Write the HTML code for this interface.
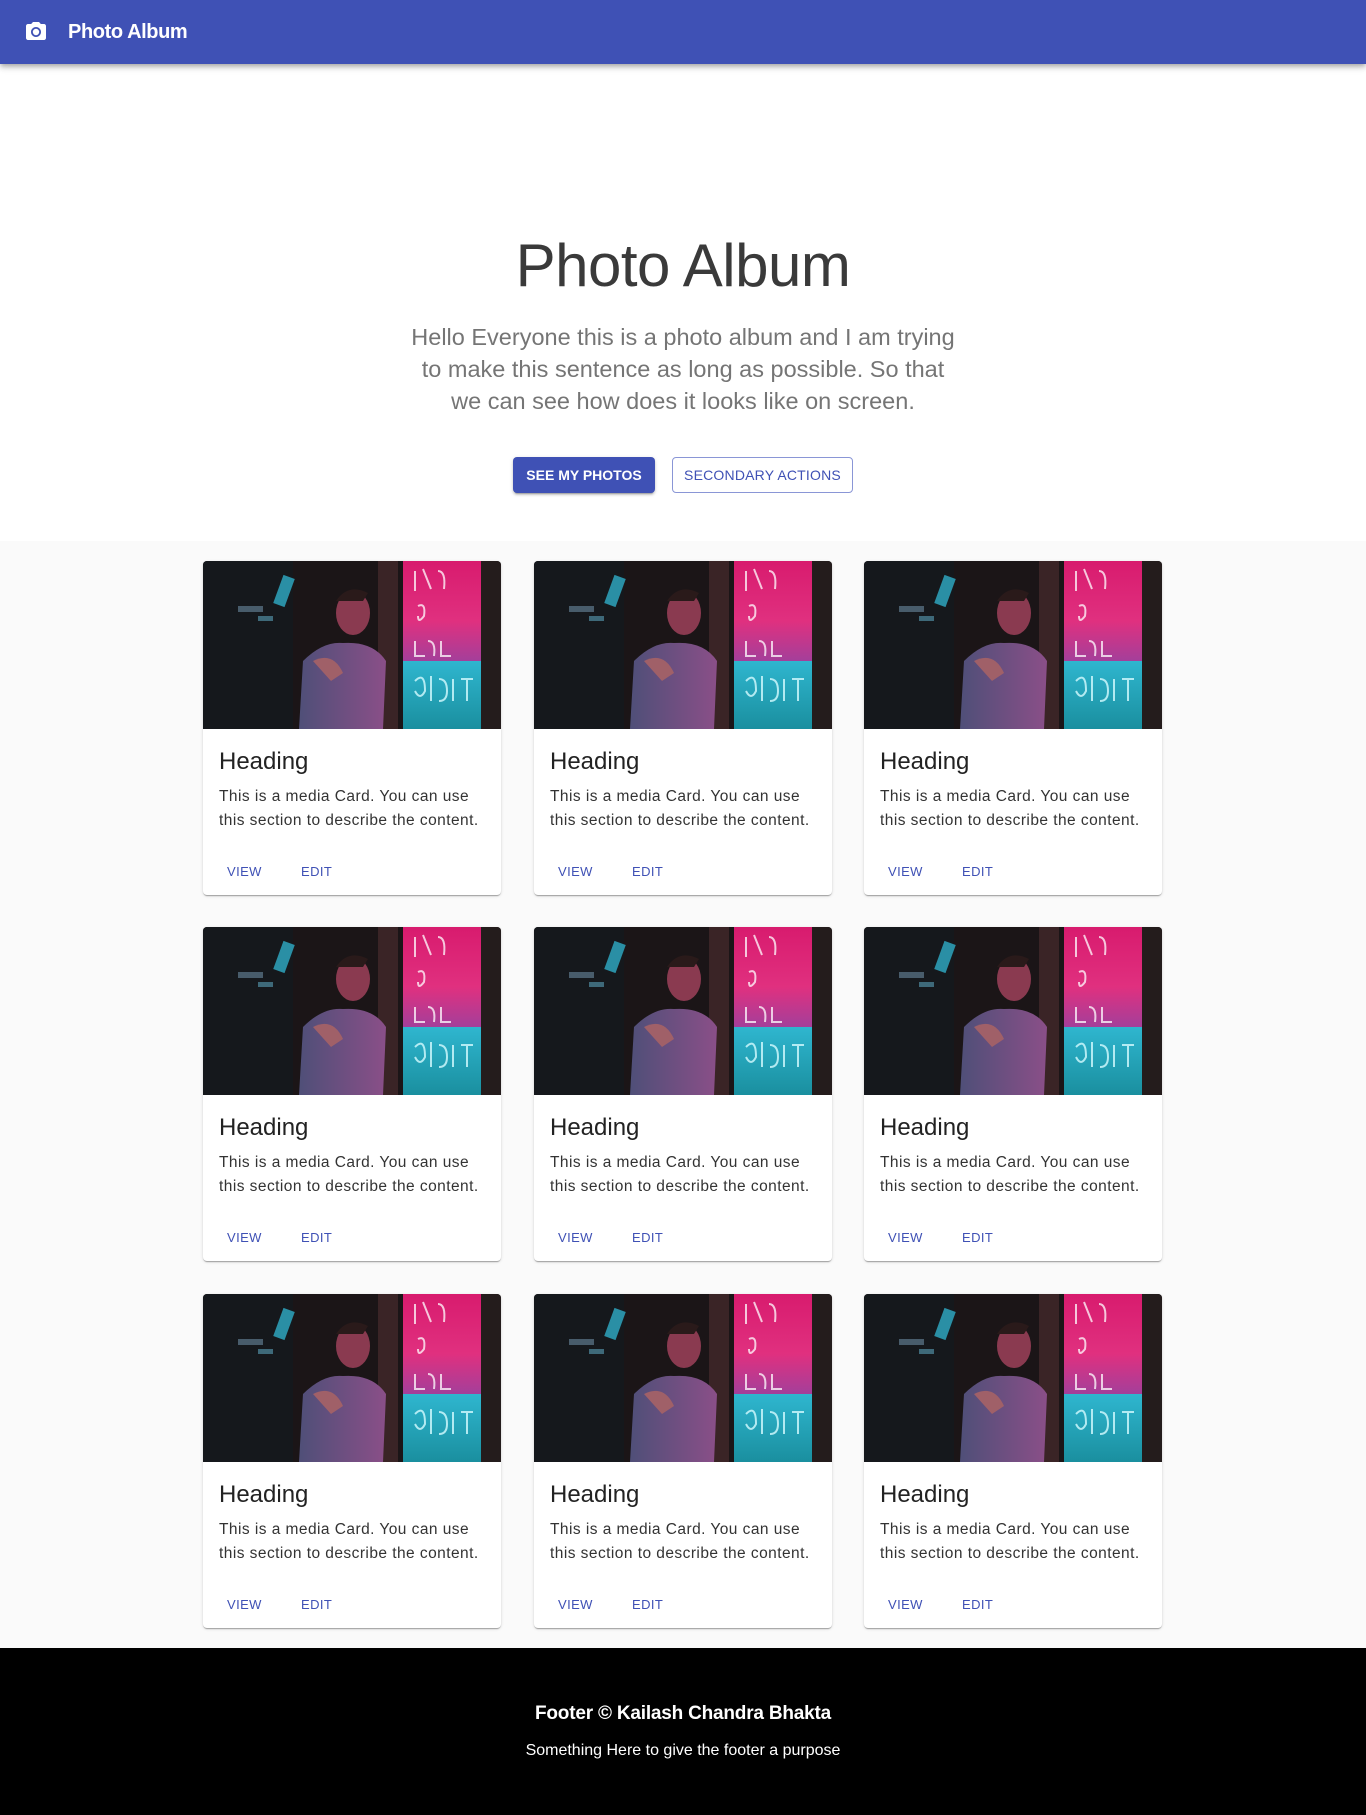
<!DOCTYPE html>
<html><head><meta charset="utf-8"><style>
*{box-sizing:border-box;margin:0;padding:0}
body{width:1366px;height:1815px;position:relative;font-family:"Liberation Sans",Arial,sans-serif;background:#fff;overflow:hidden}
.bar{position:absolute;left:0;top:0;width:1366px;height:64px;background:#3f51b5;box-shadow:0 2px 4px -1px rgba(0,0,0,.2),0 4px 5px 0 rgba(0,0,0,.14),0 1px 10px 0 rgba(0,0,0,.12);z-index:2}
.bar .t{position:absolute;left:68px;top:21px;color:#fff;font-size:20px;font-weight:bold;letter-spacing:-0.4px}
.bar svg{position:absolute;left:24px;top:20px}
h1{position:absolute;left:0;width:1366px;top:231px;text-align:center;font-size:60px;font-weight:normal;color:#3a3a3a;letter-spacing:-0.5px}
.sub{position:absolute;left:0;width:1366px;top:321px;text-align:center;font-size:23.5px;line-height:32px;color:#757575}
.b1{position:absolute;left:513px;top:457px;width:142px;height:36px;background:#3f51b5;color:#fff;border-radius:4px;font-size:14px;font-weight:bold;text-align:center;line-height:36px;box-shadow:0 3px 1px -2px rgba(0,0,0,.2),0 2px 2px 0 rgba(0,0,0,.14),0 1px 5px 0 rgba(0,0,0,.12)}
.b2{position:absolute;left:672px;top:457px;width:181px;height:36px;border:1px solid #8a96d6;color:#3f51b5;border-radius:4px;font-size:14px;text-align:center;line-height:34px;letter-spacing:0.2px}
.grey{position:absolute;left:0;top:541px;width:1366px;height:1107px;background:#fafafa}
.card{position:absolute;width:298px;height:334px;background:#fff;border-radius:4px;overflow:hidden;box-shadow:0 2px 1px -1px rgba(0,0,0,.2),0 1px 1px 0 rgba(0,0,0,.14),0 1px 3px 0 rgba(0,0,0,.12)}
.card svg{display:block}
.card h2{position:absolute;left:16px;top:187px;font-size:24px;font-weight:normal;color:#222}
.card p{position:absolute;left:16px;top:224px;font-size:15.5px;line-height:24px;color:#333;letter-spacing:0.45px}
.card .a{position:absolute;top:303px;font-size:13px;color:#3f51b5;letter-spacing:0.4px}
.foot{position:absolute;left:0;top:1648px;width:1366px;height:167px;background:#000;color:#fff;text-align:center}
.foot .h{position:absolute;left:0;width:100%;top:55px;font-size:19px;font-weight:bold;letter-spacing:-0.2px}
.foot .s{position:absolute;left:0;width:100%;top:94px;font-size:16px}
</style></head><body>
<div class="bar">
<svg width="24" height="24" viewBox="0 0 24 24"><circle cx="12" cy="12" r="3.2" fill="#fff"/><path fill="#fff" d="M9 2L7.17 4H4c-1.1 0-2 .9-2 2v12c0 1.1.9 2 2 2h16c1.1 0 2-.9 2-2V6c0-1.1-.9-2-2-2h-3.17L15 2H9zm3 15c-2.76 0-5-2.240-5-5s2.24-5 5-5 5 2.24 5 5-2.24 5-5 5z"/></svg>
<div class="t">Photo Album</div></div>
<h1>Photo Album</h1>
<div class="sub">Hello Everyone this is a photo album and I am trying<br>to make this sentence as long as possible. So that<br>we can see how does it looks like on screen.</div>
<div class="b1">SEE MY PHOTOS</div>
<div class="b2">SECONDARY ACTIONS</div>
<div class="grey"></div>

<svg width="0" height="0" style="position:absolute"><defs>
<linearGradient id="pk" x1="0" y1="0" x2="0" y2="1"><stop offset="0" stop-color="#d81b6e"/><stop offset=".6" stop-color="#e0307f"/><stop offset="1" stop-color="#a43f9a"/></linearGradient>
<linearGradient id="cy" x1="0" y1="0" x2="0" y2="1"><stop offset="0" stop-color="#2fb6cf"/><stop offset="1" stop-color="#1a8f9f"/></linearGradient>
<linearGradient id="bd" x1="0" y1="0" x2="1" y2="0"><stop offset="0" stop-color="#4f4f78"/><stop offset="1" stop-color="#8a4f88"/></linearGradient>
<g id="img">
<rect width="298" height="168" fill="#1b1517"/>
<rect x="0" y="0" width="90" height="168" fill="#15181c"/>
<rect x="75" y="15" width="12" height="30" fill="#2a8fa5" transform="rotate(20 81 30)"/>
<rect x="35" y="45" width="25" height="6" fill="#6a8aa0" opacity=".6"/>
<rect x="55" y="55" width="15" height="5" fill="#5aa0b8" opacity=".6"/>
<rect x="175" y="0" width="20" height="168" fill="#3a2426"/>
<rect x="200" y="0" width="78" height="100" fill="url(#pk)"/>
<rect x="200" y="100" width="78" height="68" fill="url(#cy)"/>
<rect x="278" y="0" width="20" height="168" fill="#241c1c"/>
<path d="M96 168 L100 100 Q120 80 140 82 Q170 80 183 100 L180 168Z" fill="url(#bd)"/>
<ellipse cx="150" cy="52" rx="17" ry="22" fill="#8a3a50"/>
<path d="M133 40 Q145 22 165 32 L160 40 Z" fill="#2a1a1a"/>
<path d="M110 100 Q130 90 140 112 L128 120Z" fill="#a06068"/>
<g fill="none" stroke="#fff" stroke-width="2" opacity=".75"><path d="M212 10 l0 20 M220 8 l8 20 M235 10 q8 0 6 18"/><path d="M215 45 q8 -4 6 10 q-6 8 -6 0"/><path d="M212 80 l0 15 l10 0 M225 80 q8 0 6 15 M238 80 l0 15 l10 0"/></g>
<g fill="none" stroke="#d6fbff" stroke-width="2" opacity=".8"><path d="M212 120 q10 -10 10 10 q-5 10 -10 0 M228 115 l0 25 M236 118 q8 0 8 12 q0 10 -8 10 M250 118 l0 22 M258 118 l12 0 M264 118 l0 22"/></g>
</g></defs></svg>

<div class="card" style="left:203px;top:561px"><svg width="298" height="168"><use href="#img"/></svg><h2>Heading</h2><p>This is a media Card. You can use<br>this section to describe the content.</p><span class="a" style="left:24px">VIEW</span><span class="a" style="left:98px">EDIT</span></div>
<div class="card" style="left:534px;top:561px"><svg width="298" height="168"><use href="#img"/></svg><h2>Heading</h2><p>This is a media Card. You can use<br>this section to describe the content.</p><span class="a" style="left:24px">VIEW</span><span class="a" style="left:98px">EDIT</span></div>
<div class="card" style="left:864px;top:561px"><svg width="298" height="168"><use href="#img"/></svg><h2>Heading</h2><p>This is a media Card. You can use<br>this section to describe the content.</p><span class="a" style="left:24px">VIEW</span><span class="a" style="left:98px">EDIT</span></div>
<div class="card" style="left:203px;top:927px"><svg width="298" height="168"><use href="#img"/></svg><h2>Heading</h2><p>This is a media Card. You can use<br>this section to describe the content.</p><span class="a" style="left:24px">VIEW</span><span class="a" style="left:98px">EDIT</span></div>
<div class="card" style="left:534px;top:927px"><svg width="298" height="168"><use href="#img"/></svg><h2>Heading</h2><p>This is a media Card. You can use<br>this section to describe the content.</p><span class="a" style="left:24px">VIEW</span><span class="a" style="left:98px">EDIT</span></div>
<div class="card" style="left:864px;top:927px"><svg width="298" height="168"><use href="#img"/></svg><h2>Heading</h2><p>This is a media Card. You can use<br>this section to describe the content.</p><span class="a" style="left:24px">VIEW</span><span class="a" style="left:98px">EDIT</span></div>
<div class="card" style="left:203px;top:1294px"><svg width="298" height="168"><use href="#img"/></svg><h2>Heading</h2><p>This is a media Card. You can use<br>this section to describe the content.</p><span class="a" style="left:24px">VIEW</span><span class="a" style="left:98px">EDIT</span></div>
<div class="card" style="left:534px;top:1294px"><svg width="298" height="168"><use href="#img"/></svg><h2>Heading</h2><p>This is a media Card. You can use<br>this section to describe the content.</p><span class="a" style="left:24px">VIEW</span><span class="a" style="left:98px">EDIT</span></div>
<div class="card" style="left:864px;top:1294px"><svg width="298" height="168"><use href="#img"/></svg><h2>Heading</h2><p>This is a media Card. You can use<br>this section to describe the content.</p><span class="a" style="left:24px">VIEW</span><span class="a" style="left:98px">EDIT</span></div>

<div class="foot"><div class="h">Footer © Kailash Chandra Bhakta</div><div class="s">Something Here to give the footer a purpose</div></div>
</body></html>
